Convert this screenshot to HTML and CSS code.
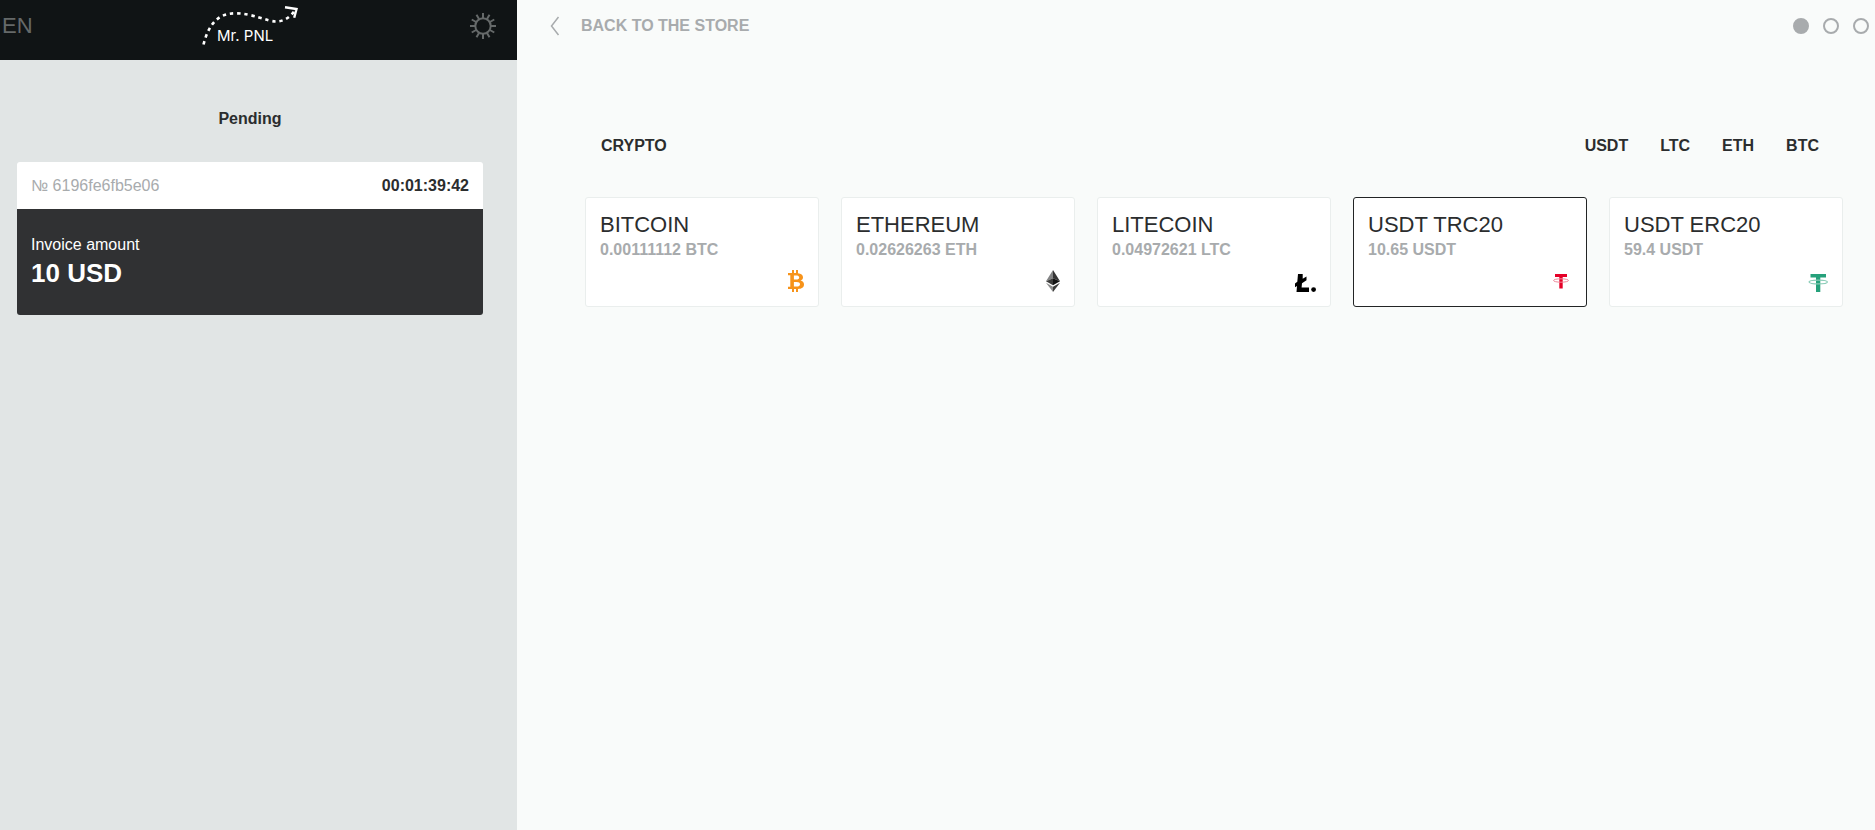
FILE: index.html
```
<!DOCTYPE html>
<html lang="en">
<head>
<meta charset="utf-8">
<meta name="viewport" content="width=device-width, initial-scale=1">
<title>Mr. PNL</title>
<link rel="stylesheet" href="styles.css">
</head>
<body>
<div class="page">
  <aside class="sidebar">
    <header class="topbar">
      <button class="lang" type="button">EN</button>
      <svg class="logo" viewBox="0 0 100 46" role="img" aria-label="Mr. PNL">
        <path d="M4.500 44.500C10 23 20 13.300 36 13.300C54 13.300 68 21.500 77 21.500C85 21.500 91 17 95 11.500" fill="none" stroke="#fff" stroke-width="2.600" stroke-dasharray="3.400 3.800"/>
        <path d="M86 7.200L97.500 9L95.200 17.800" fill="none" stroke="#fff" stroke-width="2.400"/>
        <text class="logo-text" x="18" y="41">Mr. PNL</text>
      </svg>
      <button class="theme" type="button" aria-label="Toggle theme">
        <svg width="26" height="26" viewBox="0 0 26 26" fill="none" stroke="#656969" stroke-width="2">
          <circle cx="13" cy="13" r="7.700"/>
          <path d="M13 0V5M13 21V26M0 13H5M21 13H26M6.500 1.740L9 6.070M17 19.930L19.500 24.260M1.740 6.500L6.070 9M19.930 17L24.260 19.500M1.740 19.500L6.070 17M19.930 9L24.260 6.500M6.500 24.260L9 19.930M17 6.070L19.500 1.740"/>
        </svg>
      </button>
    </header>
    <div class="order">
      <p class="status">Pending</p>
      <section class="invoice">
        <div class="invoice-head">
          <span class="number">№ 6196fe6fb5e06</span>
          <time class="timer">00:01:39:42</time>
        </div>
        <div class="invoice-body">
          <div>Invoice amount</div>
          <div class="total">10 USD</div>
        </div>
      </section>
    </div>
  </aside>
  <main class="main">
    <nav class="nav">
      <a class="back" href="#">
        <svg width="10" height="20" viewBox="0 0 10 20" fill="none" stroke="#a8abad" stroke-width="1.500"><path d="M8.500 1L1.500 10L8.500 19"/></svg>
        BACK TO THE STORE
      </a>
      <div class="steps"><span class="step current"></span><span class="step"></span><span class="step"></span></div>
    </nav>
    <div class="content">
      <div class="filters">
        <h1 class="heading">CRYPTO</h1>
        <div class="tabs">
          <button class="tab" type="button">USDT</button>
          <button class="tab" type="button">LTC</button>
          <button class="tab" type="button">ETH</button>
          <button class="tab" type="button">BTC</button>
        </div>
      </div>
      <div class="coins">
        <button class="coin" type="button">
          <span class="name">BITCOIN</span>
          <span class="price">0.00111112 BTC</span>
          <svg class="icon" width="16" height="22" viewBox="4 0 16 22" fill="#f7931a">
            <path fill-rule="evenodd" d="M4 3H8V0H10V3H12V0H14V3.200C17 3.600 19 4.800 19 7.200C19 9 18 10 16.500 10.500C18.800 11 20 12.400 20 14.600C20 17.600 17.600 18.900 14 19.100V22H12V19H10V22H8V19H4V16.800H6.300V5.200H4ZM9.900 5.400V9.600H12C14 9.600 15.200 9 15.200 7.500C15.200 6 14 5.400 12 5.400ZM9.900 11.900V16.600H12.500C14.800 16.600 16 15.800 16 14.200C16 12.600 14.800 11.900 12.500 11.900Z"/>
          </svg>
        </button>
        <button class="coin" type="button">
          <span class="name">ETHEREUM</span>
          <span class="price">0.02626263 ETH</span>
          <svg class="icon" width="14" height="22" viewBox="6 0 14 22">
            <path d="M13 0L6 11.300L13 8.300Z" fill="#828384"/><path d="M13 0L20 11.300L13 8.300Z" fill="#343434"/>
            <path d="M6 11.300L13 8.300V15.300Z" fill="#3c3c3b"/><path d="M20 11.300L13 8.300V15.300Z" fill="#141414"/>
            <path d="M6 12.700L13 16.700V22Z" fill="#8c8c8c"/><path d="M20 12.700L13 16.700V22Z" fill="#3c3c3b"/>
          </svg>
        </button>
        <button class="coin" type="button">
          <span class="name">LITECOIN</span>
          <span class="price">0.04972621 LTC</span>
          <svg class="icon" width="22" height="22" viewBox="0 0 22 22" fill="#000">
            <path d="M4 4H8.700V8.700L12.500 6.600V10.300L8 13.200L7.600 17.500H15V22H2.500L3 16L1 17.200V13.500L3.300 11.800Z"/>
            <circle cx="19.600" cy="19.600" r="2.400"/>
          </svg>
        </button>
        <button class="coin selected" type="button">
          <span class="name">USDT TRC20</span>
          <span class="price">10.65 USDT</span>
          <svg class="icon" width="22" height="22" viewBox="0 0 22 22" fill="#e50027">
            <path d="M5 4H17V7H12.700V18.500H9.300V7H5Z"/>
            <ellipse cx="11" cy="10.500" rx="7.500" ry="1.700" fill="none" stroke="#f08a9b" stroke-width="1"/>
          </svg>
        </button>
        <button class="coin" type="button">
          <span class="name">USDT ERC20</span>
          <span class="price">59.4 USDT</span>
          <svg class="icon" width="22" height="22" viewBox="0 0 22 22" fill="#26a17b">
            <path d="M4.500 4H20V7.500H14.300V22H10V7.500H4.500Z"/>
            <ellipse cx="12.200" cy="12" rx="9.200" ry="1.900" fill="none" stroke="#8accb7" stroke-width="1.200"/>
          </svg>
        </button>
      </div>
    </div>
  </main>
</div>
</body>
</html>
```
FILE: styles.css
```
* { box-sizing: border-box; }
body {
  margin: 0;
  font: 16px/20px "Liberation Sans", Arial, sans-serif;
  color: #2b2d2e;
}
button {
  margin: 0;
  padding: 0;
  border: 0;
  background: none;
  font: inherit;
  color: inherit;
  cursor: pointer;
}
.page {
  display: grid;
  grid-template-columns: 517px 1fr;
  min-height: 100vh;
}
.sidebar { background: #e1e5e5; }
.topbar {
  display: grid;
  grid-template-columns: 1fr auto 1fr;
  align-items: start;
  height: 60px;
  padding: 0 21px 0 2px;
  background: #101415;
}
.lang {
  justify-self: start;
  padding-top: 14px;
  font-size: 22px;
  line-height: 24px;
  color: #656969;
}
.logo { width: 100px; height: 46px; }
.logo-text {
  font-family: Inter, sans-serif;
  font-size: 15px;
  fill: #fff;
}
.theme { justify-self: end; padding-top: 13px; }
.theme svg { display: block; }
.order { padding: 49px 34px 0 17px; }
.status {
  margin: 0 0 33px;
  font-weight: 700;
  text-align: center;
}
.invoice { border-radius: 3px; overflow: hidden; }
.invoice-head {
  display: flex;
  justify-content: space-between;
  padding: 14px 14px 13px;
  background: #fff;
}
.number { color: #a8abad; }
.timer { font-weight: 700; }
.invoice-body {
  padding: 26px 14px 27px;
  background: #303133;
  color: #fff;
}
.total {
  padding-top: 3px;
  font-size: 26px;
  line-height: 30px;
  font-weight: 700;
}
.main { background: #f9fbfa; }
.nav {
  display: flex;
  justify-content: space-between;
  align-items: center;
  padding: 16px 6px 0 33px;
}
.back {
  display: flex;
  align-items: center;
  gap: 21px;
  font-weight: 700;
  color: #a8abad;
  text-decoration: none;
}
.steps { display: flex; gap: 14px; }
.step {
  width: 16px;
  height: 16px;
  border: 2px solid #a8abad;
  border-radius: 50%;
}
.current { background: #a8abad; }
.content { padding: 100px 32px 0 68px; }
.filters {
  display: flex;
  justify-content: space-between;
  padding: 0 24px 0 16px;
  margin-bottom: 41px;
}
.heading { margin: 0; font-size: 16px; line-height: 20px; font-weight: 700; }
.tabs { display: flex; gap: 32px; }
.tab { font-weight: 700; }
.coins {
  display: grid;
  grid-template-columns: repeat(5, 1fr);
  gap: 22px;
}
.coin {
  display: flex;
  flex-direction: column;
  padding: 13px 14px 14px;
  border: 1px solid #eaeeed;
  border-radius: 3px;
  background: #fff;
  text-align: left;
}
.selected { border-color: #222425; }
.name { font-size: 22px; line-height: 28px; }
.price {
  padding-bottom: 9px;
  line-height: 22px;
  font-weight: 700;
  color: #a8abad;
}
.icon { align-self: flex-end; }
```
